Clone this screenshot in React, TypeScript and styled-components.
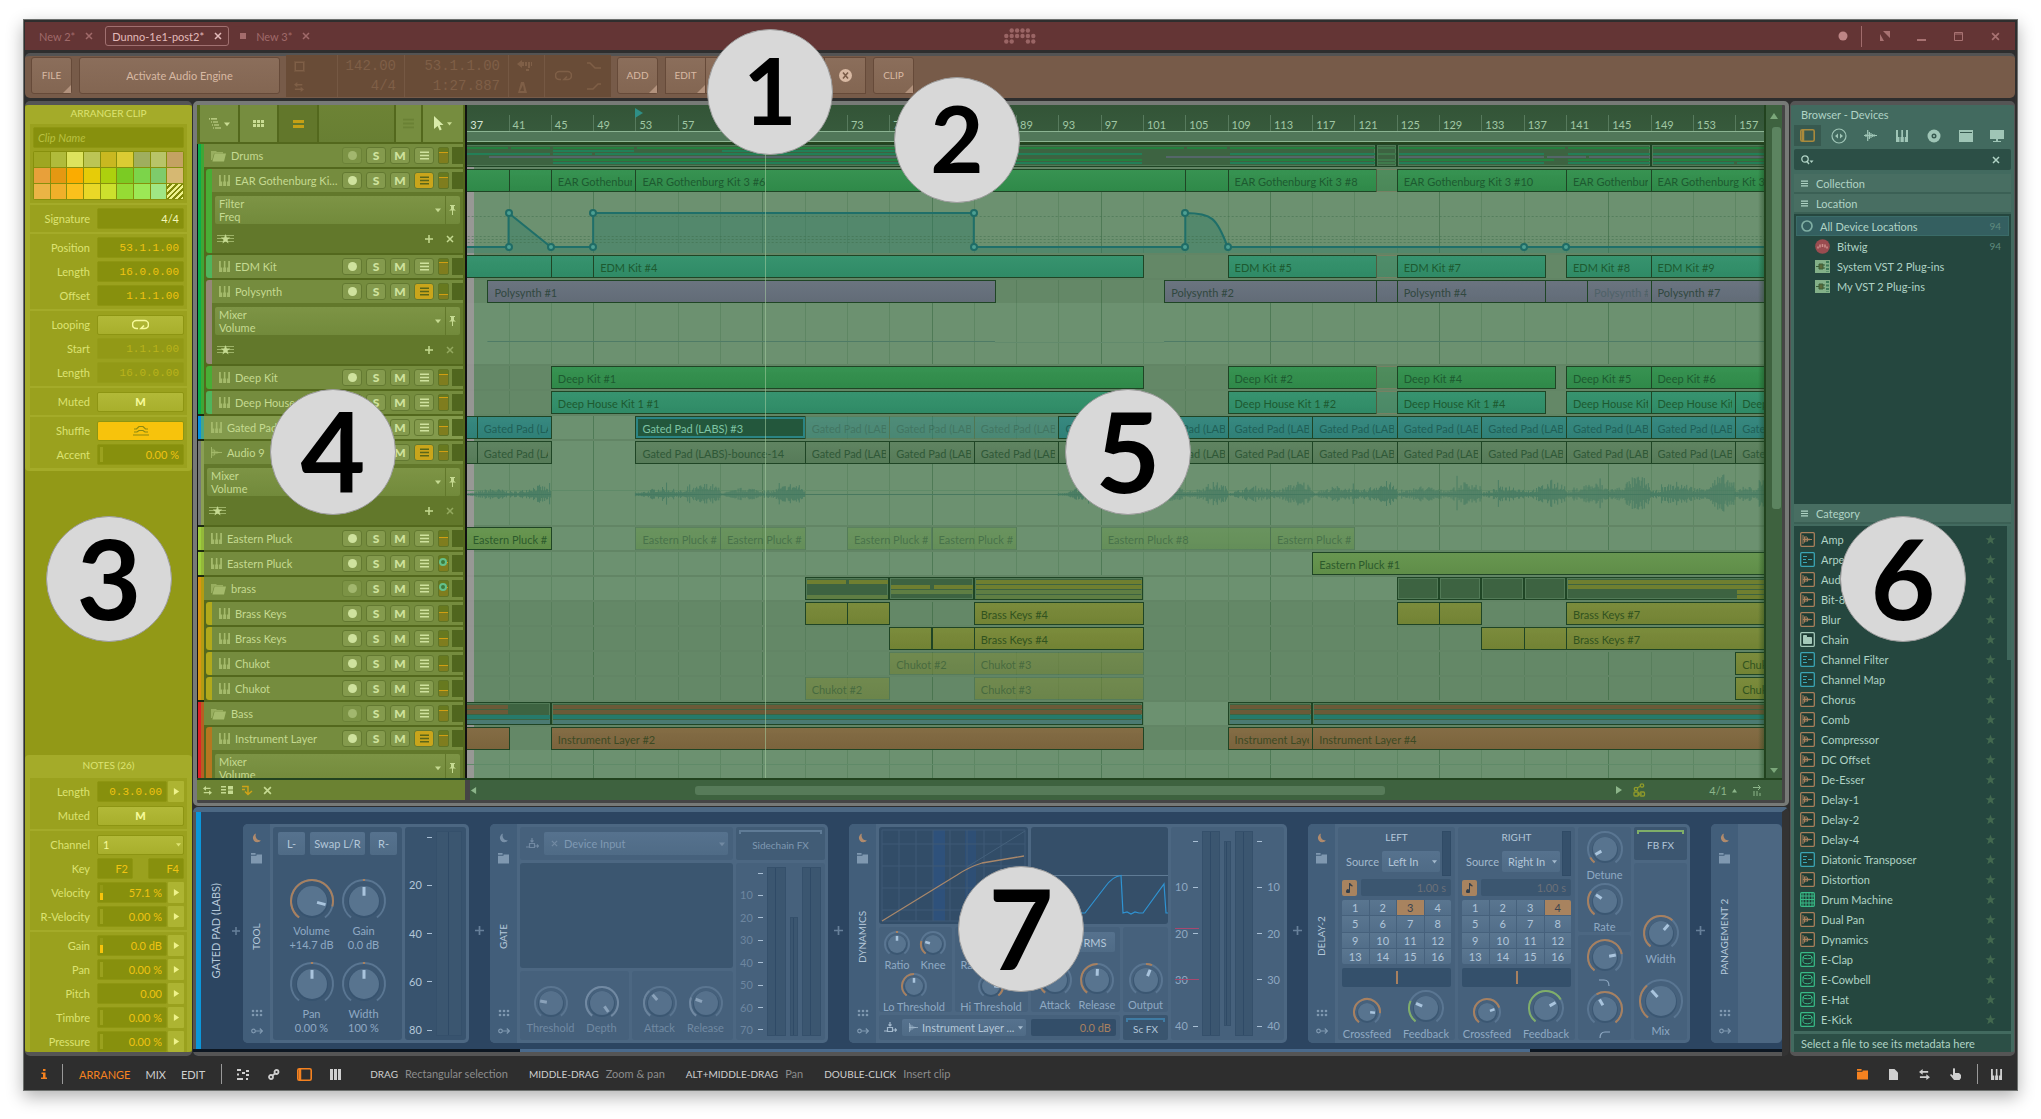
import React, { useId } from 'react';
import styled, { createGlobalStyle, css } from 'styled-components';

const Global = createGlobalStyle`
  *, *::before, *::after { box-sizing: border-box; }
  body { margin: 0; background: #fff; }
  body, button, input, select { font-family: Lato, "Open Sans", sans-serif; font-size: 11px; line-height: 13px; }
  button, input, select { margin: 0; padding: 0; border: 0; color: inherit; min-width: 0; appearance: none; background: none; border-radius: 0; }
  ul, h2, h3, p { margin: 0; padding: 0; font-size: 11px; font-weight: 400; list-style: none; }
  svg { display: block; flex: none; }
`;

/* ---------- timeline scale ---------- */
const FIRST_BAR = 37.07;
const BARS = 122.66;
const LAST = 160.5;
const pct = (bar: number) => `${((bar - FIRST_BAR) / BARS) * 100}%`;
const span = (a: number, b: number) => `${((b - a) / BARS) * 100}%`;

/* ---------- icons ---------- */
type IconProps = { s?: number };
const Keys = ({ s = 12 }: IconProps) => (
  <svg width={s} height={s} viewBox="0 0 12 12" fill="currentColor">
    <path d="M0 0h2v7h1.500v5H0zM4.500 7H5.300V0H7v7h.8v5H4.500zM8.800 7H10V0h2v12H8.800z" />
  </svg>
);
const Wave = ({ s = 12 }: IconProps) => (
  <svg width={s} height={s} viewBox="0 0 12 12" stroke="currentColor" strokeWidth="1" fill="none">
    <path d="M.5 0v12M2.200 2v8M4 3v6M5.500 4.500v3M7 5v2M8.500 5.300v1.400M0 6h12" />
  </svg>
);
const Folder = ({ s = 15 }: IconProps) => (
  <svg width={s} height={s - 3} viewBox="0 0 15 12" fill="currentColor">
    <path opacity=".75" d="M0 1h5l1 1h6v1.500H3L1.200 10H0z" /><path d="M3.600 3.500H15L13 11.500H1.400z" />
  </svg>
);
const FileTab = ({ s = 12 }: IconProps) => (
  <svg width={s} height={s} viewBox="0 0 12 12" fill="currentColor">
    <path d="M0 0h5v2H0zM0 3h6V1.500h6V11.500H0z" />
  </svg>
);
const Moon = () => (
  <svg width="10" height="10" viewBox="0 0 10 10" fill="currentColor"><path d="M4 .5A5 5 0 0 0 9 7.500 4.500 4.500 0 1 1 4 .5z" /></svg>
);
const Dots = ({ s = 12, cols = 3, rows = 2 }: { s?: number; cols?: number; rows?: number }) => (
  <svg width={s} height={(s * rows) / cols} viewBox={`0 0 ${cols * 4} ${rows * 4}`} fill="currentColor">
    {Array.from({ length: cols * rows }, (_, i) => <circle key={i} cx={(i % cols) * 4 + 2} cy={Math.floor(i / cols) * 4 + 2} r="1.3" />)}
  </svg>
);
const KeyArrow = () => (
  <svg width="12" height="8" viewBox="0 0 12 8" fill="none" stroke="currentColor" strokeWidth="1.200"><circle cx="2.500" cy="4" r="1.800" /><path d="M4.300 4H11M8.800 1.500L11.300 4 8.800 6.500" /></svg>
);
const Cross = ({ s = 7 }: IconProps) => (
  <svg width={s} height={s} viewBox="0 0 8 8" stroke="currentColor" strokeWidth="1.500"><path d="M1 1l6 6M7 1L1 7" /></svg>
);
const Plus = ({ s = 8 }: IconProps) => (
  <svg width={s} height={s} viewBox="0 0 8 8" stroke="currentColor" strokeWidth="1.500"><path d="M4 0v8M0 4h8" /></svg>
);
const Lines = ({ s = 10 }: IconProps) => (
  <svg width={s} height={s} viewBox="0 0 10 10" stroke="currentColor" strokeWidth="1.700"><path d="M0 1.500h10M0 5h10M0 8.500h10" /></svg>
);
const Tri = ({ dir = 'down', s = 6 }: { dir?: 'down' | 'up' | 'left' | 'right'; s?: number }) => {
  const d = { down: 'M0 2h8L4 7z', up: 'M0 7h8L4 1z', left: 'M7 0v8L1 4z', right: 'M1 0v8l6-4z' }[dir];
  return <svg width={s} height={s} viewBox="0 0 8 8" fill="currentColor"><path d={d} /></svg>;
};
const Loop = ({ s = 17 }: IconProps) => (
  <svg width={s} height={s * 0.65} viewBox="0 0 17 11" fill="none" stroke="currentColor" strokeWidth="1.600"><path d="M6 9.500H4.500a4 4 0 0 1 0-8h8a4 4 0 0 1 0 8H10M12 6.500L9 9.500h3.500" /></svg>
);
const StarLines = () => (
  <svg width="17" height="10" viewBox="0 0 17 10" fill="currentColor"><path opacity=".6" d="M0 1h17v1H0zM0 4h17v1H0zM0 7h17v1H0z" /><path d="M8.500 0l1.300 3.500h3.400l-2.700 2.200 1 3.800-3-2.200-3 2.200 1-3.800L3.800 3.500h3.400z" /></svg>
);
const Star = () => (
  <svg width="11" height="11" viewBox="0 0 24 24" fill="currentColor"><path d="M12 1l3 8h8l-6.500 5 2.500 8.500-7-5-7 5L7.500 14 1 9h8z" /></svg>
);
const Pin = () => (
  <svg width="7" height="10" viewBox="0 0 7 10" fill="currentColor"><path d="M1 0h5v1H5v3l2 1.500H0L2 4V1H1zM3 5.500h1V10H3z" /></svg>
);
const Swap = ({ s = 12 }: IconProps) => (
  <svg width={s} height={s} viewBox="0 0 12 12" fill="currentColor"><path d="M4 0v2.300h6v1.800H4v2.200L0 3.200zM8 5.700v2.200H1v1.800h7V12l4-3.100z" /></svg>
);
const PanelIcon = ({ s = 15 }: IconProps) => (
  <svg width={s} height={s - 2} viewBox="0 0 15 13" fill="none" stroke="currentColor" strokeWidth="1.600"><rect x=".8" y=".8" width="13.400" height="11.400" rx="1.500" /><path d="M3 1v11" strokeWidth="2.500" /></svg>
);
const Route = () => (
  <svg width="13" height="11" viewBox="0 0 13 11" fill="none" stroke="currentColor" strokeWidth="1.200"><path d="M6 0v4M4.500 2.500L6 4l1.500-1.500M3.500 5.500h5v4h-5zM0 9h3.500M8.500 8H12M11 6.500L12.500 8 11 9.500" /></svg>
);
const LOGO_DOTS = [[1, 0], [2, 0], [3, 0], [4, 0], [0, 1], [1, 1], [2, 1], [3, 1], [4, 1], [5, 1], [0, 2], [1, 2], [4, 2], [5, 2]];
const Logo = () => (
  <svg width="32" height="16" viewBox="0 0 32 16" fill="currentColor">{LOGO_DOTS.map(([x, y]) => <circle key={`${x}-${y}`} cx={x * 5.400 + 2.300} cy={y * 5.500 + 2.500} r="2.200" />)}</svg>
);

/* ---------- shell ---------- */
const Page = styled.div`position: relative; height: 100vh; padding: 19px 23px 28px; display: flex;`;
const Win = styled.div`
  flex: 1; min-width: 0; display: flex; flex-direction: column; background: #2e2e2e; border: 1px solid #6d706e; padding: 2px 2px 0 1px;
  box-shadow: 0 6px 16px rgba(0,0,0,.3);
`;
const TitleBar = styled.header`height: 28px; flex: none; display: grid; grid-template-columns: 1fr auto 1fr; align-items: center; background: #643535; color: #9a6565;`;
const Tabs = styled.nav`display: flex; align-items: center; gap: 5px; padding-left: 7px;`;
const TabBtn = styled.button<{ $on?: boolean }>`
  height: 20px; padding: 0 6px; display: flex; align-items: center; gap: 10px; border-radius: 3px;
  border: 1px solid ${p => (p.$on ? '#a07070' : 'transparent')}; color: ${p => (p.$on ? '#e3baba' : '#a06a6a')};
`;
const Sq = styled.span`width: 6px; height: 6px; background: #a46c6c; margin: 0 -2px 0 6px;`;
const WinBtns = styled.div`display: flex; justify-content: flex-end; align-items: center; padding-right: 1px;`;
const WinBtn = styled.button`width: 37px; height: 20px; display: grid; place-items: center; color: #a87272;`;
const TDiv = styled.span`width: 1px; height: 21px; background: #a06c6c; margin: 0 4px 0 0;`;

const ToolBar = styled.div`
  margin-top: 3px; height: 45px; flex: none; display: flex; align-items: flex-start; gap: 7px; padding: 1px 6px; background: #775b49;
  border-top: 3px solid #535353; border-radius: 5px; color: #d8b9a3;
`;
const TBtn = styled.button<{ $w: number; $corner?: boolean }>`
  position: relative; width: ${p => p.$w}px; height: 37px; display: grid; place-items: center; border: 1px solid #664a39; border-radius: 3px;
  background: linear-gradient(#8b6e5b, #836652);
  ${p => p.$corner && css`&::after { content: ''; position: absolute; right: 0; bottom: 0; border: solid transparent; border-width: 4px; border-right-color: #b2927d; border-bottom-color: #b2927d; }`}
`;
const BtnGroup = styled.div`display: flex; button { border-radius: 0; border-left-width: 0; } button:first-child { border-left-width: 1px; }`;
const Caps = styled.span`font-size: 10px;`;
const Display = styled.div`
  margin: -2px -1px 0; width: 325px; height: 42px; display: grid; grid-template-columns: 52px 67px 104px 36px 1fr; background: #694c37; color: #7f5f47;
  font-family: "Liberation Mono", monospace; font-size: 14px; line-height: 20px;
`;
const Cell = styled.div`display: flex; flex-direction: column; align-items: flex-end; justify-content: center; padding: 0 8px; border-right: 1px solid #755843; &:last-child { border: 0; }`;
const CellIcons = styled(Cell)`align-items: flex-start; gap: 10px;`;
const CellRow = styled(Cell)`flex-direction: row; justify-content: space-between; align-items: center; padding: 0 10px;`;

const Body = styled.main`flex: 1; min-height: 0; margin-top: 3px; display: grid; grid-template-columns: 167px minmax(0, 1fr) 225px; gap: 1px;`;

/* ---------- inspector ---------- */
const Inspector = styled.aside`
  display: flex; flex-direction: column; justify-content: space-between; background: #929917; color: #dde372;
  border: solid #555; border-width: 4px 0; border-radius: 5px;
`;
const IPanel = styled.section<{ $end?: boolean }>`background: #a4ab29; border-radius: 4px; padding: 0 5px ${p => (p.$end ? 0 : 3)}px; ${p => p.$end && css`> div:last-child { padding-bottom: 0; }`}`;
const ITitle = styled.h2<{ $h: number }>`height: ${p => p.$h}px; line-height: ${p => p.$h - 2}px; text-align: center; font-size: 10px;`;
const ISec = styled.div`display: flex; flex-direction: column; gap: 3px; padding: 3px; background: #9aa11e; & + & { margin-top: 2px; }`;
const IRow = styled.div`height: 21px; display: grid; grid-template-columns: 1fr 87px; gap: 7px; align-items: center; label, & > span { text-align: right; }`;
const Box = styled.input<{ $dim?: boolean; $mono?: boolean; $white?: boolean }>`
  width: 100%; height: 21px; padding: 0 4px; text-align: right; border-radius: 2px; border: 1px solid ${p => (p.$dim ? '#949c19' : '#8e9612')};
  background: ${p => (p.$dim ? '#929916' : '#87900d')}; color: ${p => (p.$white ? '#f4f7b8' : p.$dim ? '#b9b31c' : '#efc313')};
  ${p => p.$mono && css`font-family: "Liberation Mono", monospace;`}
`;
const NameBox = styled(Box)`text-align: left; font-style: italic; &::placeholder { color: #b9c040; opacity: 1; }`;
const IBtn = styled.button<{ $on?: boolean }>`
  width: 100%; height: 20px; display: grid; place-items: center; border-radius: 2px; font-weight: 900; border: 1px solid #8d9513;
  background: ${p => (p.$on ? '#f7c30c' : 'linear-gradient(#b2b938, #a8af2c)')}; color: ${p => (p.$on ? '#8d8a10' : '#f7fa9a')};
`;
const ISelect = styled.select`width: 100%; height: 20px; padding: 0 5px; border-radius: 2px; border: 1px solid #8d9513; background: linear-gradient(#b2b938, #a8af2c); color: #f7fa9a;`;
const SelWrap = styled.div<{ $c?: string }>`position: relative; min-width: 0; > svg { position: absolute; right: 3px; top: calc(50% - 3px); pointer-events: none; color: ${p => p.$c || 'inherit'}; }`;
const Pair = styled.div`display: grid; grid-template-columns: 36px 36px; justify-content: space-between;`;
const WithArrow = styled.div`display: grid; grid-template-columns: 1fr 16px; gap: 1px; position: relative;`;
const ArrowBtn = styled.button`height: 21px; display: grid; place-items: center; background: #adb432; border-radius: 1px; color: #eef28a;`;
const Gauge = styled.i<{ $fill?: boolean }>`position: absolute; left: 3px; top: 3px; width: 3px; height: 15px; background: ${p => (p.$fill ? 'linear-gradient(#929917 50%, #f7c30c 50%)' : '#9aa11e')};`;
const Palette = styled.div`height: 49px; display: grid; grid-template-columns: repeat(9, 1fr); grid-template-rows: repeat(3, 1fr); gap: 1px; padding: 1px; background: #87900d; border-radius: 2px;`;
const Swatch = styled.button<{ $c: string }>`background: ${p => p.$c};`;

const SWATCHES = ['#9ea622', '#b0bb3b', '#dde35d', '#bcc555', '#c9b820', '#dbcc33', '#9fae5e', '#b8c468', '#c4a262',
  '#e8a03a', '#e59812', '#fbac00', '#e6cc08', '#add00e', '#7bcb23', '#7cd44a', '#7ecb6b', '#d6b872',
  '#ebb445', '#f0b02a', '#fbc11c', '#e9d827', '#cce02d', '#96db34', '#9ce855', '#a0e684',
  'repeating-linear-gradient(135deg, #eef28a 0 2px, #808808 2px 4px)'];

function Field({ label, value, mono, dim, white, gauge }: { label: string; value: string; mono?: boolean; dim?: boolean; white?: boolean; gauge?: boolean }) {
  const id = useId();
  return (
    <IRow><label htmlFor={id}>{label}</label>
      <SelWrap><Box id={id} defaultValue={value} $mono={mono} $dim={dim} $white={white} />{gauge && <Gauge />}</SelWrap></IRow>
  );
}
function ArrowField({ label, value, mono, gauge }: { label: string; value: string; mono?: boolean; gauge?: 'empty' | 'fill' }) {
  const id = useId();
  return (
    <IRow><label htmlFor={id}>{label}</label>
      <WithArrow><Box id={id} defaultValue={value} $mono={mono} />{gauge && <Gauge $fill={gauge === 'fill'} />}<ArrowBtn aria-label={`${label} options`}><Tri dir="right" s={7} /></ArrowBtn></WithArrow></IRow>
  );
}
const InspectorView = () => (
  <Inspector>
    <IPanel>
      <ITitle $h={19}>ARRANGER CLIP</ITitle>
      <ISec><NameBox aria-label="Clip name" placeholder="Clip Name" />
        <Palette>{SWATCHES.map((c, i) => <Swatch key={i} $c={c} aria-label={`Colour ${i + 1}`} />)}</Palette></ISec>
      <ISec><Field label="Signature" value="4/4" white /></ISec>
      <ISec><Field label="Position" value="53.1.1.00" mono /><Field label="Length" value="16.0.0.00" mono /><Field label="Offset" value="1.1.1.00" mono /></ISec>
      <ISec><IRow><span>Looping</span><IBtn aria-label="Looping"><Loop /></IBtn></IRow>
        <Field label="Start" value="1.1.1.00" mono dim /><Field label="Length" value="16.0.0.00" mono dim /></ISec>
      <ISec><IRow><span>Muted</span><IBtn>M</IBtn></IRow></ISec>
      <ISec><IRow><span>Shuffle</span><IBtn $on aria-label="Shuffle">
        <svg width="16" height="11" viewBox="0 0 16 11" fill="none" stroke="currentColor" strokeWidth="1.200"><path d="M1 4h2.500L6 1.500h4L12.500 4H15M1 7h3l2-1.500h4L12 7h3M0 10h16" /></svg></IBtn></IRow>
        <Field label="Accent" value="0.00 %" gauge /></ISec>
    </IPanel>
    <IPanel $end>
      <ITitle $h={23}>NOTES (26)</ITitle>
      <ISec><ArrowField label="Length" value="0.3.0.00" mono /><IRow><span>Muted</span><IBtn>M</IBtn></IRow></ISec>
      <ISec>
        <IRow><label htmlFor="channel">Channel</label><SelWrap><ISelect id="channel"><option>1</option></ISelect><Tri s={5} /></SelWrap></IRow>
        <IRow><span>Key</span><Pair><Box aria-label="Lowest key" defaultValue="F2" /><Box aria-label="Highest key" defaultValue="F4" /></Pair></IRow>
        <ArrowField label="Velocity" value="57.1 %" gauge="fill" /><ArrowField label="R-Velocity" value="0.00 %" gauge="empty" />
      </ISec>
      <ISec>
        <ArrowField label="Gain" value="0.0 dB" gauge="fill" /><ArrowField label="Pan" value="0.00 %" gauge="empty" /><ArrowField label="Pitch" value="0.00" />
        <ArrowField label="Timbre" value="0.00 %" gauge="empty" /><ArrowField label="Pressure" value="0.00 %" gauge="empty" />
      </ISec>
    </IPanel>
  </Inspector>
);

/* ---------- arranger ---------- */
const Center = styled.div`display: flex; flex-direction: column; min-width: 0; min-height: 0; gap: 1px;`;
const Arranger = styled.section`flex: 1; min-height: 0; display: flex; flex-direction: column; background: #454545; border: solid #777a77; border-width: 4px 4px 3px; border-radius: 5px; padding: 0 3px 3px 0;`;
const TopRow = styled.div`display: flex; flex: none; height: 39px; background: #1d2b14;`;
const HeadTools = styled.div`width: 270px; flex: none; display: flex; gap: 2px; padding: 0 2px 2px 3px; background: #53681d; border-right: 2px solid #111;`;
const HeadBtn = styled.button<{ $w: number; $on?: boolean; $c?: string }>`
  width: ${p => p.$w}px; display: flex; align-items: center; justify-content: center; gap: 3px; color: ${p => p.$c || (p.$on ? '#c4a015' : '#c9dc93')};
  background: ${p => (p.$on ? '#62772b' : '#768d3f')};
`;
const HeadGap = styled.div`flex: 1; background: linear-gradient(#6d8335, #687f33);`;
const Ruler = styled.div`position: relative; flex: 1; min-width: 0; overflow: hidden; background: #25431f;`;
const RulerBar = styled.div`height: 27px; border-bottom: 1px solid #8cb493; position: relative; background: linear-gradient(#335437, #375a3c);`;
const LoopStrip = styled.div`height: 10px; background: #517759; border-bottom: 1px solid #8cb493;`;
const Tick = styled.span`position: absolute; bottom: 0; height: 16px; padding: 3px 0 0 3px; border-left: 1px solid #577a5d; color: #a0c7a4; &:first-child { border-color: transparent; color: #d5e6d6; }`;
const Cue = styled.span`position: absolute; top: 3px; color: #2f8f86;`;
const VBar = styled.div<{ $foot?: boolean }>`width: 18px; flex: none; background: #3e623f; color: #7ba77a; display: flex; flex-direction: column; align-items: center; border-left: 2px solid #22431f; ${p => p.$foot && css`justify-content: space-between; padding-bottom: 4px;`}`;
const VBarTop = styled(VBar)`justify-content: flex-start; padding-top: 7px; gap: 7px;`;
const VThumbTop = styled.span`width: 9px; flex: 1; margin-left: 4px; background: #5c8460; border-radius: 3px 3px 0 0;`;
const VThumb = styled.span`width: 9px; height: 365px; margin-left: 4px; background: #5c8460; border-radius: 0 0 3px 3px;`;
const Rows = styled.div`flex: 1; min-height: 0; display: flex; overflow: hidden; border-bottom: 2px solid #22431f;`;
const Headers = styled.div`width: 270px; flex: none; background: #53681d; border-right: 2px solid #111; border-left: 1px solid #111;`;

const TRow = styled.div<{ $open?: boolean }>`height: ${p => (p.$open ? 86 : 25)}px; display: flex; gap: 2px; padding-right: 2px;`;
const Strip = styled.span<{ $a: string; $b: string; $last?: boolean }>`
  width: 6px; flex: none; margin-right: -2px; background: linear-gradient(90deg, ${p => p.$a} 50%, ${p => p.$b} 50%); border-bottom: ${p => (p.$last ? '2px solid #1c2a10' : '0')};
`;
const ChildStrip = styled.span<{ $c: string }>`width: 6px; flex: none; margin: 0 -2px 2px 2px; background: ${p => p.$c}; border-radius: 3px 0 0 3px;`;
const TBody = styled.div`flex: 1; min-width: 0; display: flex; flex-direction: column; margin-bottom: 2px; background: #62782b;`;
const TLine = styled.div<{ $sel?: boolean }>`
  height: 23px; flex: none; display: flex; align-items: center; gap: 4px; padding: 0 0 0 7px; color: #c5da91; background: ${p => (p.$sel ? '#839a4c' : '#758c3e')};
  > svg { color: #a4ba6b; }
`;
const TName = styled.span`flex: 1; min-width: 0; white-space: nowrap; overflow: hidden; text-overflow: ellipsis; padding-left: 1px;`;
const TB = styled.button<{ $on?: boolean; $dim?: boolean }>`
  width: 20px; height: 17px; flex: none; display: grid; place-items: center; border-radius: 3px; border: 1px solid #637931; font-weight: 900; font-size: 12px;
  background: ${p => (p.$on ? '#c9a51b' : '#849a4d')}; color: ${p => (p.$on ? '#5a6618' : '#cfe29e')}; opacity: ${p => (p.$dim ? 0.5 : 1)};
`;
const Rec = styled.i`width: 9px; height: 9px; border-radius: 50%; background: currentColor;`;
const MiniFader = styled.i<{ $y: number; $knob?: boolean }>`
  position: relative; width: 11px; height: 17px; flex: none; border: 1px solid #5f7426; border-radius: 2px;
  background: linear-gradient(#67791f ${p => p.$y}px, #d19e12 ${p => p.$y}px, #d19e12 ${p => p.$y + 1}px, #7f7d1e ${p => p.$y + 1}px);
  &::after { content: ''; display: ${p => (p.$knob ? 'block' : 'none')}; position: absolute; left: 0; top: 2px; width: 8px; height: 8px; border: 2px solid #63c08a; border-radius: 50%; background: #3e7a3a; }
`;
const MiniMeter = styled.i`width: 11px; height: 17px; flex: none; background: #50661e; margin-left: -1px;`;
const AutoSel = styled.button`
  height: 28px; margin: 4px 3px 0; padding: 0 4px; text-align: left; display: grid; grid-template-columns: 1fr 10px 7px; align-items: center; column-gap: 4px; border-radius: 2px;
  background: linear-gradient(90deg, transparent calc(100% - 15px), #62782b calc(100% - 15px), #62782b calc(100% - 14px), transparent calc(100% - 14px)), linear-gradient(#7d9445, #728a3b); color: #c5da91; flex: none;
`;
const AutoRow = styled.div<{ $dim: boolean }>`display: flex; align-items: center; gap: 13px; padding: 10px 9px 0 5px; color: #c5da91; > :first-child { margin-right: auto; } > :last-child { opacity: ${p => (p.$dim ? 0.5 : 1)}; }`;

const Timeline = styled.div`position: relative; flex: 1; min-width: 0; overflow: hidden; background: #668a68;`;
const Lane = styled.div<{ $open?: boolean; $child?: boolean }>`position: relative; height: ${p => (p.$open ? 86 : 25)}px; border-bottom: 2px solid #628565; background: ${p => (p.$child ? '#648867' : '#6c9170')};`;
const LaneTop = styled.div<{ $child?: boolean }>`height: 23px; background: ${p => (p.$child ? '#648867' : 'transparent')};`;
const GridLine = styled.i<{ $heavy?: boolean }>`position: absolute; top: 0; bottom: 0; width: 1px; background: ${p => (p.$heavy ? 'rgba(40,90,50,.42)' : 'rgba(40,90,50,.2)')};`;
const EdgeShade = styled.i`position: absolute; left: 0; top: 0; bottom: -2px; width: 7px; background: rgba(165,155,162,.75);`;
const RightShade = styled.i`position: absolute; right: 0; top: 0; bottom: 0; width: 6px; background: linear-gradient(90deg, transparent, rgba(20,60,20,.4));`;
const Playhead = styled.i`position: absolute; top: 0; bottom: 0; width: 1px; background: rgba(165,205,160,.55);`;
const ClipBox = styled.div<{ $c: string; $state?: string; $cut?: boolean; $text?: string }>`
  position: absolute; top: 0; height: 23px; padding: 5px 3px 0 ${p => (p.$cut ? 16 : 6)}px; overflow: hidden; white-space: nowrap; border: 1px solid #1f4525;
  background: linear-gradient(rgba(255,255,255,.03), rgba(0,0,0,.04)), ${p => p.$c}; color: ${p => p.$text || '#1d5a30'};
  ${p => p.$state === 'muted' && css`opacity: .55; border-color: #4d7450;`}
  ${p => p.$state === 'ghost' && css`opacity: .45; border-color: #8a7a60;`}
  ${p => p.$state === 'sel' && css`background: #23573c; color: #7fc4a4; box-shadow: inset 0 0 0 2px #2b8484;`}
`;
const ClipIn = styled.span`display: block; overflow: hidden;`;
const GroupBox = styled.div`position: absolute; top: 0; height: 23px; background: #3d6341; border: 1px solid #1f4525; box-shadow: inset 0 0 0 1px #527a57;`;
const MiniBar = styled.i<{ $c: string; $h: number }>`position: absolute; height: ${p => p.$h}px; background: ${p => p.$c};`;
const Curve = styled.svg`position: absolute; left: 0; top: 23px; width: 100%; height: 61px;`;
const Handle = styled.i`position: absolute; width: 8px; height: 8px; margin: -4px 0 0 -4px; border: 2px solid #1f6c66; border-radius: 50%; background: #4da093;`;

type Clip = [number, number, string?, string?, string?];
type Track = {
  name: string; icon: 'keys' | 'wave' | 'folder'; child?: boolean; a: string; b: string; c?: string; auto?: [string, string]; open?: boolean; fader: number; knob?: boolean; sel?: boolean; last?: boolean;
  color: string; text?: string; clips: Clip[]; boxes?: [number, number][]; bars?: Bar[]; barH?: number;
};
type Bar = [number, number, number, string];
const G = '#318f4c', T = '#31906a', P = '#66707c';
const octets = (from: number, label: string, state?: string): Clip[] => {
  const r: Clip[] = [];
  for (let b = from; b < 160; b += 8) r.push([b, Math.min(b + 8, LAST), label, state]);
  return r;
};
const row = (y: number, c: string, ranges: number[][]): Bar[] => ranges.map(([a, b]) => [a, b, y, c]);
const DRUM_BARS: Bar[] = [
  ...row(3, '#24813f', [[36, 41], [41, 45], [45, 53], [53, 105], [105, 109], [109, 123], [125, 141], [141, 149], [149, LAST]]),
  ...row(6, '#237f57', [[45, 53], [61, 81]]),
  ...row(9, '#237f57', [[36, 45], [45, 49], [49, 101], [109, 123], [125, 139], [141, 149], [149, LAST]]),
  ...row(12, '#55666a', [[39, 87], [103, 123], [125, 139], [139, 143], [143, 149], [149, LAST]]),
  ...row(15, '#24813f', [[45, 101], [109, 123], [125, 140], [141, 149], [149, LAST]]),
  ...row(18, '#237f57', [[45, 101], [109, 123], [125, 139], [141, 149], [149, 157], [157, LAST]]),
  ...[3, 9, 15, 18].flatMap(y => row(y, '#3f7a4c', [[123, 125]])),
];
const BASS_BARS: Bar[] = [
  ...[3, 8].flatMap(y => row(y, '#6b5a38', [[36, 41], [45, 101], [109, 117], [117, LAST]])),
  ...row(13, '#267a6b', [[36, 45], [45, 101], [109, 117], [117, LAST]]),
  ...row(18, '#4b7a72', [[36, 45], [45, 101], [109, 117], [117, LAST]]),
];
const BRASS_BARS: Bar[] = [
  ...row(3, '#6f7f30', [[69, 73], [73, 77], [85, 101], [141, LAST]]),
  ...row(8, '#6f7f30', [[77, 81], [81, 85], [85, 101], [141, LAST]]),
  ...row(13, '#5f7e43', [[77, 85], [85, 101]]), ...row(18, '#5f7e43', [[69, 77], [85, 101]]),
  ...row(13, '#6f7f30', [[157, LAST]]), ...row(18, '#6f7f30', [[157, LAST]]),
];
const DRUMS = { a: '#0aae4c', b: '#3fa735' };
const BRASS = { a: '#d99513', b: '#b39c12' };
const BASS = { a: '#e02228', b: '#b66022' };
const TRACKS: Track[] = [
  { name: 'Drums', icon: 'folder', ...DRUMS, fader: 4, color: G, clips: [], boxes: [[36, 123], [123, 125], [125, 149], [149, LAST]], bars: DRUM_BARS, barH: 2 },
  { name: 'EAR Gothenburg Kit 3', icon: 'keys', child: true, ...DRUMS, c: '#49ad35', auto: ['Filter', 'Freq'], open: true, fader: 4, color: G,
    clips: [[36, 41], [41, 45], [45, 53, 'EAR Gothenburg Kit'], [53, 105, 'EAR Gothenburg Kit 3 #6'], [105, 109], [109, 123, 'EAR Gothenburg Kit 3 #8'], [123, 125, '', 'ghost'], [125, 141, 'EAR Gothenburg Kit 3 #10'], [141, 149, 'EAR Gothenburg Kit'], [149, LAST, 'EAR Gothenburg Kit 3 #12']] },
  { name: 'EDM Kit', icon: 'keys', child: true, ...DRUMS, c: '#4fb55c', fader: 3, color: T,
    clips: [[36, 45], [45, 49], [49, 101, 'EDM Kit #4'], [109, 123, 'EDM Kit #5'], [123, 125, '', 'ghost'], [125, 139, 'EDM Kit #7'], [141, 149, 'EDM Kit #8'], [149, LAST, 'EDM Kit #9']] },
  { name: 'Polysynth', icon: 'keys', child: true, ...DRUMS, c: '#968778', auto: ['Mixer', 'Volume'], open: true, fader: 10, color: P, text: '#31483f',
    clips: [[39, 87, 'Polysynth #1'], [103, 123, 'Polysynth #2'], [123, 125], [125, 139, 'Polysynth #4'], [139, 143], [143, 149, 'Polysynth #', '', '#4f6268'], [149, LAST, 'Polysynth #7']] },
  { name: 'Deep Kit', icon: 'keys', child: true, ...DRUMS, c: '#49ad35', fader: 4, color: G,
    clips: [[45, 101, 'Deep Kit #1'], [109, 123, 'Deep Kit #2'], [123, 125, '', 'ghost'], [125, 140, 'Deep Kit #4'], [141, 149, 'Deep Kit #5'], [149, LAST, 'Deep Kit #6']] },
  { name: 'Deep House Kit 1', icon: 'keys', child: true, ...DRUMS, c: '#4fb55c', fader: 2, color: T, last: true,
    clips: [[45, 101, 'Deep House Kit 1 #1'], [109, 123, 'Deep House Kit 1 #2'], [123, 125, '', 'ghost'], [125, 139, 'Deep House Kit 1 #4'], [141, 149, 'Deep House Kit'], [149, 157, 'Deep House Kit'], [157, LAST, 'Deep House']] },
  { name: 'Gated Pad (LABS)', icon: 'keys', a: '#0892e0', b: '#4aa583', fader: 6, sel: true, last: true, color: '#31857c', text: '#1f5f56',
    clips: [[36, 38], [38, 45, 'Gated Pad (LABS)'], [53, 69, 'Gated Pad (LABS) #3', 'sel', '#7fc4a4'], [69, 77, 'Gated Pad (LABS)', 'muted'], [77, 85, 'Gated Pad (LABS)', 'muted'], [85, 93, 'Gated Pad (LABS)', 'muted'], ...octets(93, 'Gated Pad (LABS)')] },
  { name: 'Audio 9', icon: 'wave', a: '#767a78', b: '#8a9f54', auto: ['Mixer', 'Volume'], open: true, fader: 6, last: true, color: '#5a805c', text: '#2f5837',
    clips: [[36, 38], [38, 45, 'Gated Pad (LABS)'], [53, 69, 'Gated Pad (LABS)-bounce-14'], ...octets(69, 'Gated Pad (LABS)')] },
  { name: 'Eastern Pluck', icon: 'keys', a: '#9fce3e', b: '#93b839', fader: 6, last: true, color: '#63934b', text: '#2c5a2c',
    clips: [[36, 45, 'Eastern Pluck #'], [53, 61, 'Eastern Pluck #', 'muted'], [61, 69, 'Eastern Pluck #', 'muted'], [73, 81, 'Eastern Pluck #', 'muted'], [81, 89, 'Eastern Pluck #', 'muted'], [97, 113, 'Eastern Pluck #8', 'muted'], [113, 121, 'Eastern Pluck #', 'muted']] },
  { name: 'Eastern Pluck', icon: 'keys', a: '#9fce3e', b: '#93b839', fader: 6, knob: true, last: true, color: '#63934b', text: '#2c5a2c', clips: [[117, LAST, 'Eastern Pluck #1']] },
  { name: 'brass', icon: 'folder', ...BRASS, fader: 6, knob: true, color: '#778836', clips: [], boxes: [[69, 77], [77, 85], [85, 101], [125, 129], [129, 133], [133, 137], [137, 141], [141, LAST]], barH: 4, bars: BRASS_BARS },
  { name: 'Brass Keys', icon: 'keys', child: true, ...BRASS, c: '#b1a91b', fader: 6, color: '#778836', text: '#31531f', clips: [[69, 73], [73, 77], [85, 101, 'Brass Keys #4'], [125, 129], [129, 133], [141, LAST, 'Brass Keys #7']] },
  { name: 'Brass Keys', icon: 'keys', child: true, ...BRASS, c: '#b1a91b', fader: 7, color: '#778836', text: '#31531f', clips: [[77, 81], [81, 85], [85, 101, 'Brass Keys #4'], [133, 137], [137, 141], [141, LAST, 'Brass Keys #7']] },
  { name: 'Chukot', icon: 'keys', child: true, ...BRASS, c: '#b1a91b', fader: 9, color: '#778836', text: '#31531f', clips: [[77, 85, 'Chukot #2', 'muted'], [85, 101, 'Chukot #3', 'muted'], [157, LAST, 'Chukot #4']] },
  { name: 'Chukot', icon: 'keys', child: true, ...BRASS, c: '#b1a91b', fader: 9, last: true, color: '#778836', text: '#31531f', clips: [[69, 77, 'Chukot #2', 'muted'], [85, 101, 'Chukot #3', 'muted'], [157, LAST, 'Chukot #4']] },
  { name: 'Bass', icon: 'folder', ...BASS, fader: 4, color: '#80683f', clips: [], boxes: [[36, 45], [45, 101], [109, 117], [117, LAST]], bars: BASS_BARS, barH: 4 },
  { name: 'Instrument Layer', icon: 'keys', child: true, ...BASS, c: '#b57720', auto: ['Mixer', 'Volume'], open: true, fader: 4, color: '#80683f', text: '#3d4a24',
    clips: [[36, 41], [45, 101, 'Instrument Layer #2'], [109, 117, 'Instrument Layer'], [117, LAST, 'Instrument Layer #4']] },
];

const wavePath = () => {
  let seed = 7, d = '';
  const rnd = () => { seed = (seed * 16807) % 2147483647; return seed / 2147483647; };
  const segs: [number, number, number][] = [[37, 45, 9], [53, 61, 11], [61, 69, 11], [93, 101, 11], [101, 109, 12], [109, 117, 13], [117, 125, 13], [125, 133, 13], [133, 141, 14], [141, 149, 18], [149, 157, 19], [157, 160, 17]];
  segs.forEach(([a, b, amp]) => {
    for (let x = a; x < b; x += 0.095) {
      const t = (x - a) / (b - a);
      const env = 0.18 + 0.5 * Math.pow(Math.sin(t * 5.5), 2) * (0.5 + t) + 0.35 * t * (1 - Math.pow(t, 9));
      let h = amp * env * (0.35 + 0.65 * Math.pow(rnd(), 1.5));
      if (rnd() > 0.97) h *= 2;
      d += `M${x.toFixed(2)} ${(30.5 - h).toFixed(1)}V${(30.5 + h * 0.85).toFixed(1)}`;
    }
  });
  return d;
};
const WAVE = wavePath();
const LOW = 55, HIGH = 21;
const HANDLES: [number, number][] = [[41, HIGH], [41, LOW], [45, LOW], [49, LOW], [49, HIGH], [85, HIGH], [85, LOW], [105, LOW], [105, HIGH], [109, LOW], [137, LOW], [141, LOW]];
const AUTO = `M36 ${LOW}H41V${HIGH}L45 ${LOW}H49V${HIGH}H85V${LOW}H105V${HIGH}C107.500 ${HIGH} 108 26 109 ${LOW}H161`;
const VB = `${FIRST_BAR} 0 ${BARS} 61`;
const rulerBars = Array.from({ length: 31 }, (_, i) => 37 + i * 4);

const TrackHeader = ({ t }: { t: Track }) => (
  <TRow $open={t.open}>
    <Strip $a={t.a} $b={t.b} $last={t.last} />
    {t.child && <ChildStrip $c={t.c!} />}
    <TBody>
      <TLine $sel={t.sel}>
        {t.icon === 'keys' ? <Keys s={11} /> : t.icon === 'wave' ? <Wave s={11} /> : <Folder />}
        <TName>{t.name}</TName>
        <TB $dim={t.icon === 'folder'} aria-label="Record arm"><Rec /></TB><TB>S</TB><TB>M</TB>
        <TB $on={!!t.auto} aria-label="Automation lanes"><Lines s={9} /></TB>
        <MiniFader $y={t.fader} $knob={t.knob} /><MiniMeter />
      </TLine>
      {t.auto && <>
        <AutoSel><span>{t.auto[0]}<br />{t.auto[1]}</span><Tri s={6} /><Pin /></AutoSel>
        <AutoRow $dim={t.auto[0] === 'Mixer'}><StarLines /><Plus /><Cross s={8} /></AutoRow>
      </>}
    </TBody>
  </TRow>
);
const LaneView = ({ t }: { t: Track }) => (
  <Lane $open={t.open} $child={t.child && !t.open}>
    <LaneTop $child={t.child} />
    {rulerBars.slice(1).map(b => <GridLine key={b} $heavy={(b - 1) % 16 === 0} style={{ left: pct(b) }} />)}
    <EdgeShade />
    {t.boxes?.map(([a, b]) => <GroupBox key={a} style={{ left: pct(a), width: span(a, b) }} />)}
    {t.bars?.map(([a, b, y, c], i) => <MiniBar key={i} $c={c} $h={t.barH!} style={{ left: `calc(${pct(a)} + 2px)`, width: `calc(${span(a, b)} - 3px)`, top: y }} />)}
    {t.clips.map(([a, b, label, state, text], i) => (
      <ClipBox key={i} $c={t.color} $state={state} $cut={a === 36} $text={text || t.text} style={{ left: pct(a), width: `calc(${span(a, b)} + 1px)` }}><ClipIn>{label}</ClipIn></ClipBox>
    ))}
    {t.name.startsWith('EAR') && <>
      <Curve viewBox={VB} preserveAspectRatio="none">
        <path d={`${AUTO}V61H36Z`} fill="#2f7a66" opacity=".4" />
        <path d="M36 24.500H161M36 44.500H161M36 47.500H161M36 50.500H161" stroke="#3f6e4c" strokeWidth="1" strokeDasharray="2 2" vectorEffect="non-scaling-stroke" opacity=".5" />
        <path d={AUTO} fill="none" stroke="#1f6f69" strokeWidth="2" vectorEffect="non-scaling-stroke" />
      </Curve>
      {HANDLES.map(([b, y], i) => <Handle key={i} style={{ left: pct(b), top: y + 23 }} />)}
    </>}
    {t.name === 'Polysynth' && <Curve viewBox={VB} preserveAspectRatio="none"><path d="M39 38.500H87M103 38.500H161" stroke="#4f7b66" vectorEffect="non-scaling-stroke" /><path d="M87 39.500H103" stroke="#628a6c" vectorEffect="non-scaling-stroke" /></Curve>}
    {t.name === 'Audio 9' && <Curve viewBox={VB} preserveAspectRatio="none">
      <path d="M36 26.500H161" stroke="#5f8a68" vectorEffect="non-scaling-stroke" />
      <path d="M36 30.500H45M53 30.500H161" stroke="#48785f" vectorEffect="non-scaling-stroke" />
      <path d={WAVE} stroke="#447a62" vectorEffect="non-scaling-stroke" opacity=".8" />
    </Curve>}
    {t.name === 'Instrument Layer' && <Curve viewBox={VB} preserveAspectRatio="none"><path d="M36 14.500H161" stroke="#5f8a68" vectorEffect="non-scaling-stroke" /></Curve>}
  </Lane>
);

const BottomRow = styled.div`height: 20px; flex: none; display: flex;`;
const BottomLeft = styled.div`width: 268px; flex: none; display: flex; align-items: center; gap: 8px; padding-left: 4px; background: #6b8232; color: #c5da91;`;
const SmallBtn = styled.button<{ $c?: string }>`width: 12px; height: 16px; display: grid; place-items: center; color: ${p => p.$c || 'inherit'};`;
const Snap = styled(SmallBtn)`margin-left: 10px;`;
const BottomRight = styled.div`flex: 1; display: flex; align-items: center; margin-left: 5px; padding-right: 20px; background: #3e623f; color: #8cb58a;`;
const HTrack = styled.div`flex: 1; height: 9px; margin: 0 12px 0 7px; display: grid; grid-template-columns: 213fr 696fr 220fr; i { grid-column: 2; background: #577b59; border-radius: 3px; }`;
const Zoom = styled.span`display: flex; align-items: center; gap: 5px; margin: 0 13px 0 64px;`;

const ArrangerView = () => (
  <Arranger>
    <TopRow>
      <HeadTools>
        <HeadBtn $w={38} aria-label="Track view"><svg width="12" height="11" viewBox="0 0 12 11" stroke="currentColor" strokeWidth="1.200"><path d="M0 .8h1M2 .8h6M2 4h1M4 4h5M3 7h1M5 7h5M4 10h1M6 10h6" /></svg><Tri s={6} /></HeadBtn>
        <HeadBtn $w={37} aria-label="Launcher"><svg width="11" height="7" viewBox="0 0 11 7" fill="currentColor"><path d="M0 0h3v3H0zM4 0h3v3H4zM8 0h3v3H8zM0 4h3v3H0zM4 4h3v3H4zM8 4h3v3H8z" /></svg></HeadBtn>
        <HeadBtn $w={38} $on aria-label="Timeline"><svg width="11" height="8" viewBox="0 0 11 8" fill="currentColor"><path d="M0 0h11v3H0zM0 5h11v3H0z" /></svg></HeadBtn>
        <HeadGap />
        <HeadBtn $w={25} $c="#6a8135" aria-label="Cue markers"><Lines s={11} /></HeadBtn>
        <HeadBtn $w={40} aria-label="Pointer tool"><svg width="10" height="15" viewBox="0 0 10 15" fill="#d9ebaa"><path d="M0 0l9.500 9H5.700l2 4.500-2 1L3.600 10 0 13z" /></svg><Tri s={5} /></HeadBtn>
      </HeadTools>
      <Ruler>
        <RulerBar>{rulerBars.map(b => <Tick key={b} style={{ left: pct(b) }}>{b}</Tick>)}
          <Cue style={{ left: pct(53) }}><svg width="8" height="10" viewBox="0 0 8 10" fill="currentColor"><path d="M0 0l8 5-8 5z" /></svg></Cue></RulerBar>
        <LoopStrip />
      </Ruler>
      <VBarTop><Tri dir="up" s={8} /><VThumbTop /></VBarTop>
    </TopRow>
    <Rows>
      <Headers>{TRACKS.map((t, i) => <TrackHeader key={i} t={t} />)}</Headers>
      <Timeline>
        {TRACKS.map((t, i) => <LaneView key={i} t={t} />)}
        <Playhead style={{ left: pct(65.28) }} />
        <RightShade />
      </Timeline>
      <VBar $foot><VThumb /><Tri s={8} /></VBar>
    </Rows>
    <BottomRow>
      <BottomLeft>
        <SmallBtn aria-label="Input output"><Swap s={9} /></SmallBtn>
        <SmallBtn aria-label="Mixer sections"><svg width="12" height="8" viewBox="0 0 12 8" fill="currentColor"><path d="M0 0h5v1.500H0zM0 3h5v1.500H0zM0 6h5v1.500H0zM7 0h5v3.500H7zM7 4.500h5V8H7z" /></svg></SmallBtn>
        <SmallBtn $c="#cfa318" aria-label="Follow"><svg width="11" height="11" viewBox="0 0 11 11" fill="none" stroke="currentColor" strokeWidth="1.500"><path d="M0 1.500h6V9M3 6.500L6 9.500l4-3.500M0 4.500h3" /></svg></SmallBtn>
        <SmallBtn aria-label="Crossfade"><Cross s={9} /></SmallBtn>
      </BottomLeft>
      <BottomRight>
        <Tri dir="left" s={7} /><HTrack><i /></HTrack><Tri dir="right" s={8} />
        <Snap $c="#8f9a2a" aria-label="Snap"><svg width="13" height="14" viewBox="0 0 13 14" fill="none" stroke="currentColor" strokeWidth="1.300"><circle cx="3" cy="6" r="1.700" /><circle cx="9" cy="2.500" r="1.700" /><path d="M4 5l4-2" /><rect x="1" y="9" width="4.500" height="4" rx="1" /><rect x="7" y="9" width="4.500" height="4" rx="1" /><path d="M4 11h5" /></svg></Snap>
        <Zoom>4/1 <Tri dir="up" s={5} /></Zoom>
        <SmallBtn aria-label="Follow playback"><svg width="9" height="12" viewBox="0 0 9 12" fill="none" stroke="currentColor"><path d="M1 3.500h7M6 1l2.500 2.500L6 6M2 7v5M5 7v5M8 9v3" /></svg></SmallBtn>
      </BottomRight>
    </BottomRow>
  </Arranger>
);

/* ---------- device chain ---------- */
const Chain = styled.section`
  height: 249px; flex: none; display: flex; flex-direction: column; background: #2c4561; color: #a3b9cd; border: solid #4c6883; border-width: 5px 7px 0 0; border-right-color: #333; border-radius: 5px; overflow: hidden;
`;
const ChainRow = styled.div`flex: 1; min-height: 0; display: flex; padding-left: 3px; overflow: hidden; background: linear-gradient(90deg, #555 3px, transparent 3px);`;
const ChainColor = styled.i`width: 5px; flex: none; background: #0b97da;`;
const ChainName = styled.div`width: 28px; flex: none; display: grid; place-items: center; span { writing-mode: vertical-rl; transform: rotate(180deg); white-space: nowrap; color: #b6c9da; }`;
const Add = styled.button<{ $w: number }>`width: ${p => p.$w}px; flex: none; display: grid; place-items: center; color: #67809a;`;
const ChainFoot = styled.div`height: 7px; flex: none; padding-left: 327px; border-bottom: 4px solid #555; background: #0d1722; i { display: block; width: 80%; height: 3px; background: #4a6a8c; }`;
const Device = styled.article<{ $w?: number }>`
  ${p => (p.$w ? css`width: ${p.$w}px; flex: none;` : css`flex: 1 0 71px;`)} height: 219px; margin-top: 12px; display: flex; background: #4c6782; border-radius: 5px; overflow: hidden;
`;
const DStrip = styled.div<{ $on: boolean }>`width: 27px; flex: none; display: flex; flex-direction: column; align-items: center; background: #425e7a; padding: 9px 0 8px; color: #7f98b0; gap: 10px; > :first-child { color: ${p => (p.$on ? '#b08a6c' : '#7890a8')}; }`;
const DName = styled.h3`flex: 1; writing-mode: vertical-rl; transform: rotate(180deg); text-align: center; font-size: 10px; color: #b6c9da; white-space: nowrap;`;
const DBody = styled.div<{ $cols: string }>`flex: 1; min-width: 0; padding: 3px; display: grid; grid-template-columns: ${p => p.$cols}; gap: 3px;`;
const Col = styled.div<{ $rows?: string }>`min-width: 0; min-height: 0; display: grid; grid-template-columns: minmax(0, 1fr); gap: 3px; ${p => p.$rows && css`grid-template-rows: ${p.$rows};`}`;
const Split = styled.div<{ $cols: string }>`display: grid; grid-template-columns: ${p => p.$cols}; gap: 3px; min-height: 0;`;
const Pane = styled.div<{ $bg?: string; $dim?: boolean; $p?: string }>`
  position: relative; min-width: 0; min-height: 0; background: ${p => p.$bg || '#46617c'}; border-radius: 3px; padding: ${p => p.$p || '0'}; ${p => p.$dim && css`color: #7189a2;`}
`;
const Flex = styled.div<{ $gap?: number; $j?: string; $a?: string; $p?: string; $col?: boolean }>`
  display: flex; flex-direction: ${p => (p.$col ? 'column' : 'row')}; gap: ${p => p.$gap || 0}px; justify-content: ${p => p.$j || 'flex-start'}; align-items: ${p => p.$a || 'center'}; padding: ${p => p.$p || 0};
`;
const DBtn = styled.button<{ $w?: number; $h?: number }>`
  ${p => p.$w && css`width: ${p.$w}px;`} height: ${p => p.$h || 23}px; flex: none; background: linear-gradient(#56728e, #4f6b86); border-radius: 2px; color: #b4c7d9;
`;
const DSelect = styled.select<{ $dim?: boolean; $pl?: number }>`width: 100%; height: 100%; padding: 0 ${p => (p.$pl ? 10 : 14)}px 0 ${p => p.$pl ?? 6}px; background: linear-gradient(#56728e, #4f6b86); border-radius: 2px; color: ${p => (p.$dim ? '#7f99b3' : '#b4c7d9')};`;
const SelBox = styled(SelWrap)<{ $w?: number; $h: number }>`${p => (p.$w ? css`width: ${p.$w}px; flex: none;` : css`flex: 1;`)} height: ${p => p.$h}px;`;
const SelLead = styled.span`position: absolute; left: 7px; top: 0; height: 100%; display: flex; align-items: center; pointer-events: none;`;
const KnobLabel = styled.label<{ $w?: number; $dim?: boolean }>`
  position: relative; display: flex; flex-direction: column; align-items: center; width: ${p => p.$w || 52}px; flex: none; white-space: nowrap; color: ${p => (p.$dim ? '#7189a2' : '#8fa9c3')}; text-align: center; line-height: 14px;
  input { position: absolute; inset: 0; width: 100%; height: 100%; opacity: 0; }
`;
const polar = (c: number, r: number, deg: number) => { const a = ((deg - 90) * Math.PI) / 180; return `${(c + r * Math.cos(a)).toFixed(2)} ${(c + r * Math.sin(a)).toFixed(2)}`; };
const arc = (c: number, r: number, a: number, b: number) => `M${polar(c, r, a)}A${r} ${r} 0 ${b - a > 180 ? 1 : 0} 1 ${polar(c, r, b)}`;
function Knob({ r = 17, at, from, to, c = '#a8805f', label, value, w, dim, name }: { r?: number; at: number; from?: number; to?: number; c?: string; label?: React.ReactNode; value?: string; w?: number; dim?: boolean; name?: string }) {
  const s = r * 2 + 4, m = s / 2, inner = Math.round(r * 0.72);
  return (
    <KnobLabel $w={w} $dim={dim}>
      <svg width={s} height={s} viewBox={`0 0 ${s} ${s}`} fill="none">
        <path d={arc(m, r, -142, 142)} stroke={dim ? '#5a7590' : '#5a7692'} strokeWidth="2" />
        {from !== undefined && <path d={arc(m, r, from, to ?? at)} stroke={c} strokeWidth="2" />}
        <circle cx={m} cy={m + 1} r={inner + 1} fill="#34506c" opacity=".6" />
        <circle cx={m} cy={m} r={inner} fill={dim ? '#56718c' : '#58748f'} />
        <path d={`M${polar(m, inner * 0.35, at)}L${polar(m, inner - 1, at)}`} stroke={dim ? '#8aa2ba' : '#a9c4dd'} strokeWidth={r > 15 ? 3 : 2.5} />
      </svg>
      <input type="range" aria-label={name} min={-142} max={142} defaultValue={at} />
      {label && <span>{label}</span>}{value && <span>{value}</span>}
    </KnobLabel>
  );
}
const Scale = styled.div<{ $py: number; $dim?: boolean; $right?: boolean; $bright?: boolean }>`
  flex: 1; display: flex; flex-direction: column; justify-content: space-between; padding: ${p => p.$py}px 0; color: ${p => (p.$bright ? '#b4c7d9' : p.$dim ? '#6d86a0' : '#8fa8c1')};
  span { height: 12px; line-height: 12px; display: flex; flex-direction: ${p => (p.$right ? 'row-reverse' : 'row')}; justify-content: flex-end; align-items: center; gap: 5px; }
  span::after { content: ''; width: 5px; height: 1px; background: #a9bfd4; }
`;
const MBars = styled.div<{ $w: number; $m?: string }>`width: ${p => p.$w}px; margin: ${p => p.$m || 0}; background: linear-gradient(90deg, #3b5670 calc(50% - 1px), #2f4a66 calc(50% - 1px), #2f4a66 50%, #3b5670 50%); border: 1px solid #35506b;`;
const Meter = styled(Pane)`display: flex; padding: 4px; gap: 4px;`;
const FxBtn = styled.button<{ $c: string; $bg?: string; $text?: string }>`
  position: relative; width: 100%; border-radius: 2px; background: ${p => p.$bg || '#3c5670'}; color: ${p => p.$text || '#b4c7d9'}; font-size: 10px; padding-top: 3px;
  &::before { content: ''; position: absolute; left: 3px; right: 3px; top: 3px; height: 4px; border: 2px solid ${p => p.$c}; border-bottom: 0; }
`;
const DeviceStrip = ({ name, on = true }: { name: string; on?: boolean }) => (
  <DStrip $on={on}><Moon /><FileTab s={11} /><DName>{name}</DName><Dots s={12} /><KeyArrow /></DStrip>
);
const StepGrid = styled.div`height: 64px; display: grid; grid-template-columns: repeat(4, 1fr); grid-template-rows: repeat(4, 1fr); gap: 1px; border-radius: 2px; overflow: hidden; background: #46617c;`;
const Step = styled.button<{ $on?: boolean }>`background: ${p => (p.$on ? '#a8835f' : 'linear-gradient(#5a7690, #526e89)')}; color: ${p => (p.$on ? '#3a4450' : '#b0c5d9')};`;
const DDiv = styled.div`height: 19px; background: #34506b; border-radius: 2px; display: grid; place-items: center; margin-top: 4px; i { width: 2px; height: 13px; background: #a8805f; }`;
const Num = styled.input<{ $lit?: boolean }>`flex: 1; height: 17px; text-align: right; padding-right: 5px; background: ${p => (p.$lit ? '#334e69' : '#3b5670')}; border-radius: 2px; color: ${p => (p.$lit ? '#a8805f' : '#6b7078')};`;
const NoteBtn = styled.button`width: 15px; height: 16px; background: #a8835f; border-radius: 2px; color: #333f4c; display: grid; place-items: center;`;
const ChTitle = styled.div`height: 20px; line-height: 20px; text-align: center; font-size: 10px; color: #b4c7d9;`;
const ChMeter = styled.i`position: absolute; right: 4px; top: 4px; width: 9px; height: 45px; background: #35506b; border: 1px solid #304b66;`;
const Peak = styled.i<{ $y: number }>`position: absolute; left: 4px; top: ${p => p.$y}px; width: 24px; height: 1px; background: #a8486f;`;

const DelaySide = ({ title, on, src, fb }: { title: string; on: number; src: string; fb: number }) => (
  <Pane $p="0 4px">
    <ChTitle>{title}</ChTitle><ChMeter />
    <Flex $gap={3} $p="4px 11px 7px 0" $j="flex-end"><span>Source</span><SelBox $w={58} $h={21}><DSelect aria-label={`${title} source`}><option>{src}</option></DSelect><Tri s={5} /></SelBox></Flex>
    <Flex $gap={4} $p="0 0 4px"><NoteBtn aria-label="Sync"><svg width="7" height="10" viewBox="0 0 7 10" fill="currentColor"><path d="M3 0h1l3 3-1 .5-2-1V8a2 2 0 1 1-1-1.500z" /></svg></NoteBtn><Num aria-label={`${title} time`} defaultValue="1.00 s" /></Flex>
    <StepGrid>{Array.from({ length: 16 }, (_, i) => <Step key={i} $on={i + 1 === on}>{i + 1}</Step>)}</StepGrid>
    <DDiv><i /></DDiv>
    <Flex $a="flex-end" $j="space-between" $p="2px 0 0"><Knob r={13} at={title === 'LEFT' ? 95 : 70} from={-142} label="Crossfeed" w={50} /><Knob r={17} at={fb} from={-142} c="#7fae68" label="Feedback" w={50} /></Flex>
  </Pane>
);

const GraphSvg = styled.svg`width: 100%; height: 100%;`;
const LowFrame = styled.div`padding-top: 35px; display: flex; justify-content: center;`;
const DevicesView = () => (
  <Chain>
    <ChainRow>
      <ChainColor /><ChainName><span>GATED PAD (LABS)</span></ChainName><Add $w={14} aria-label="Add device"><Plus s={8} /></Add>
      <Device $w={226}>
        <DeviceStrip name="TOOL" />
        <DBody $cols="129px 1fr">
          <Pane $bg="#3d5873">
            <Flex $p="5px" $j="space-between"><DBtn $w={27}>L-</DBtn><DBtn $w={55}>Swap L/R</DBtn><DBtn $w={27}>R-</DBtn></Flex>
            <Flex $j="center" $p="18px 0 0"><Knob r={21} at={105} from={-142} label="Volume" value="+14.7 dB" /><Knob r={21} at={0} from={-3} to={3} label="Gain" value="0.0 dB" /></Flex>
            <Flex $j="center" $p="9px 0 0"><Knob r={21} at={0} from={-3} to={3} label="Pan" value="0.00 %" /><Knob r={21} at={0} from={-3} to={3} label="Width" value="100 %" /></Flex>
          </Pane>
          <Meter $bg="#38536e"><Scale $py={0} $bright>{['', '20', '40', '60', '80'].map(v => <span key={v}>{v}</span>)}</Scale><MBars $w={28} /></Meter>
        </DBody>
      </Device>
      <Add $w={21} aria-label="Add device"><Plus s={9} /></Add>
      <Device $w={338}>
        <DeviceStrip name="GATE" on={false} />
        <DBody $cols="213px 1fr">
          <Col $rows="33px 105px 1fr">
            <Pane $dim $p="5px"><Flex $gap={5} $p="0 0 0 1px"><Route /><SelBox $h={23}><DSelect $dim $pl={20} aria-label="Sidechain input"><option>Device Input</option></DSelect><SelLead><Cross s={7} /></SelLead><Tri s={6} /></SelBox></Flex></Pane>
            <Pane $bg="#3b5670" />
            <Split $cols="109px 1fr">
              <Pane $dim><Flex $j="center" $p="14px 0 0"><Knob r={16} at={-80} dim label="Threshold" w={54} /><Knob r={16} at={145} from={-142} c="#7189a2" dim label="Depth" w={48} /></Flex></Pane>
              <Pane $dim><Flex $j="center" $p="14px 0 0"><Knob r={16} at={-42} from={-142} c="#6a839c" dim label="Attack" w={46} /><Knob r={16} at={-70} from={-142} c="#7189a2" dim label="Release" w={46} /></Flex></Pane>
            </Split>
          </Col>
          <Col $rows="33px 1fr">
            <FxBtn $c="#5f7b96" $bg="#415c76" $text="#7f98b1">Sidechain FX</FxBtn>
            <Meter $dim><Scale $py={0} $dim>{['', '10', '20', '30', '40', '50', '60', '70'].map(v => <span key={v}>{v}</span>)}</Scale><MBars $w={20} /><MBars $w={9} $m="50px 0 0" /><MBars $w={20} /></Meter>
          </Col>
        </DBody>
      </Device>
      <Add $w={21} aria-label="Add device"><Plus s={9} /></Add>
      <Device $w={438}>
        <DeviceStrip name="DYNAMICS" />
        <DBody $cols="289px 1fr">
          <Col $rows="97px 85px 1fr">
            <Split $cols="149px 1fr">
              <Pane $bg="#324d68">
                <GraphSvg viewBox="0 0 149 97" preserveAspectRatio="none" fill="none">
                  <rect x="54" y="3" width="12" height="91" fill="#2d5380" opacity=".8" /><rect x="86" y="3" width="11" height="91" fill="#2d5078" opacity=".8" />
                  <path d="M3 3h143v91H3zM20 3v91M37 3v91M54 3v91M71 3v91M88 3v91M105 3v91M122 3v91M3 17h143M3 39h143M3 61h143M3 83h143" stroke="#3f5b76" strokeWidth="1" />
                  <path d="M88 40L146 4" stroke="#45617c" strokeWidth="1" /><path d="M3 94L78 48Q90 40 103 36L145 29" stroke="#a8876a" strokeWidth="1.300" />
                </GraphSvg>
              </Pane>
              <Pane $bg="#354f69">
                <GraphSvg viewBox="0 0 137 97" preserveAspectRatio="none" fill="none">
                  <path d="M0 48.500H137" stroke="#5f7b95" /><path d="M0 86H54L74 60Q82 49 90 48.500L92 86L96 85L100 87L104 85L108 86L112 86L133 57L135 86H137" stroke="#2f93d2" strokeWidth="1.200" />
                </GraphSvg>
              </Pane>
            </Split>
            <Split $cols="73px 73px 89px 1fr">
              <Pane><Flex $p="3px 0 0"><Knob r={12} at={0} from={-5} to={5} label="Ratio" w={36} /><Knob r={12} at={-75} from={-142} label="Knee" w={36} /></Flex><Flex $p="0 0 0 2px"><Knob r={12} at={0} from={-142} label="Lo Threshold" w={66} /></Flex></Pane>
              <Pane><Flex $p="3px 0 0"><Knob r={12} at={0} label="Ratio" w={36} /><Knob r={12} at={-75} label="Knee" w={36} /></Flex><Flex $p="0 0 0 3px"><Knob r={12} at={95} from={95} to={142} label="Hi Threshold" w={66} /></Flex></Pane>
              <Pane><Flex $j="flex-end" $p="5px 5px 10px"><DBtn $w={40} $h={20}>RMS</DBtn></Flex><Flex $p="0 0 0 3px"><Knob r={16} at={-90} from={-142} label="Attack" w={42} /><Knob r={16} at={2} from={-142} label="Release" w={42} /></Flex></Pane>
              <Pane><LowFrame><Knob r={16} at={22} from={0} label="Output" w={44} /></LowFrame></Pane>
            </Split>
            <Split $cols="1fr 45px">
              <Pane><Flex $gap={5} $p="4px 4px 4px 5px"><Route /><SelBox $w={124} $h={17}><DSelect $pl={20} aria-label="Source track"><option>Instrument Layer ...</option></DSelect><SelLead><Wave s={9} /></SelLead><Tri s={5} /></SelBox><Num $lit aria-label="Sidechain gain" defaultValue="0.0 dB" /></Flex></Pane>
              <FxBtn $c="#3f7ba3" $bg="#3a556f">Sc FX</FxBtn>
            </Split>
          </Col>
          <Meter><Scale $py={4}>{['', '10', '20', '30', '40'].map(v => <span key={v}>{v}</span>)}</Scale><MBars $w={21} /><MBars $w={9} $m="10px 0" /><MBars $w={21} /><Scale $py={4} $right>{['', '10', '20', '30', '40'].map(v => <span key={v}>{v}</span>)}</Scale><Peak $y={101} /><Peak $y={152} /></Meter>
        </DBody>
      </Device>
      <Add $w={21} aria-label="Add device"><Plus s={9} /></Add>
      <Device $w={382}>
        <DeviceStrip name="DELAY-2" />
        <DBody $cols="117px 117px 53px 1fr">
          <DelaySide title="LEFT" on={3} src="Left In" fb={-65} />
          <DelaySide title="RIGHT" on={4} src="Right In" fb={60} />
          <Col $rows="105px 105px">
            <Pane><Flex $col $p="3px 0 0"><Knob r={17} at={-120} from={-142} label="Detune" w={50} /><Knob r={17} at={-55} from={-142} label="Rate" w={50} /></Flex></Pane>
            <Pane><Flex $col $p="3px 0 0"><Knob r={17} at={80} from={-142} name="High cut" w={50} label={<svg width="11" height="14" viewBox="0 0 11 14" fill="none" stroke="currentColor" strokeWidth="1.200"><path d="M0 4h5q5 0 5 6" /></svg>} /><Knob r={17} at={-30} from={-30} to={142} name="Low cut" w={50} label={<svg width="11" height="14" viewBox="0 0 11 14" fill="none" stroke="currentColor" strokeWidth="1.200"><path d="M11 4H6Q1 4 1 10" /></svg>} /></Flex></Pane>
          </Col>
          <Col $rows="33px 1fr">
            <FxBtn $c="#7fae68">FB FX</FxBtn>
            <Pane><Flex $col $p="51px 0 0" $gap={12}><Knob r={17} at={42} from={-142} label="Width" w={50} /><Knob r={21} at={-42} from={-142} label="Mix" w={50} /></Flex></Pane>
          </Col>
        </DBody>
      </Device>
      <Add $w={21} aria-label="Add device"><Plus s={9} /></Add>
      <Device><DeviceStrip name="PANAGEMENT 2" /></Device>
    </ChainRow>
    <ChainFoot><i /></ChainFoot>
  </Chain>
);

/* ---------- browser ---------- */
const Browser = styled.aside`display: flex; flex-direction: column; background: #426a5f; border: solid #555; border-width: 4px 1px; border-radius: 5px; padding: 0 3px; color: #b0d3c5; min-height: 0;`;
const BTitle = styled.h2`height: 20px; line-height: 20px; padding-left: 7px;`;
const BIcons = styled.div`height: 21px; margin-bottom: 3px; display: flex; justify-content: space-between; color: #9fc5b6;`;
const BIcon = styled.button<{ $on?: boolean }>`width: 27px; display: grid; place-items: center; ${p => p.$on && css`background: #37594f; color: #a98a3c;`}`;
const Search = styled.label`height: 21px; flex: none; margin-bottom: 4px; display: grid; grid-template-columns: 15px 1fr auto; align-items: center; padding: 0 11px 0 7px; background: #2c4f46; border-radius: 2px; input { height: 19px; }`;
const BHead = styled.button`height: 20px; flex: none; display: flex; align-items: center; gap: 8px; padding-left: 7px; background: #486e62; border-bottom: 2px solid #3b6055; width: 100%;`;
const LocList = styled.ul`height: 290px; flex: none; background: #25473f; padding: 2px 2px 0;`;
const Loc = styled.li<{ $sel?: boolean; $in?: boolean }>`
  height: 20px; display: flex; align-items: center; gap: 7px; padding: 0 8px 0 ${p => (p.$in ? 19 : 5)}px;
  ${p => p.$sel && css`background: #345f60; outline: 1px solid #3a6b68; outline-offset: -1px;`}
  em { margin-left: auto; font-style: normal; color: #5f8a7e; font-size: 10px; }
`;
const CatWrap = styled.div`flex: 1; min-height: 0; margin-top: 2px; display: grid; grid-template-columns: 1fr 4px; background: #25473f; overflow: hidden;`;
const CatList = styled.ul`padding-top: 3px;`;
const Cat = styled.li`height: 20px; display: flex; align-items: center; gap: 6px; padding: 0 11px 0 6px; > :last-child { margin-left: auto; color: #43694f; }`;
const CatThumb = styled.i`height: 134px; background: #3f675c;`;
const BFoot = styled.p`height: 18px; flex: none; margin-top: 3px; line-height: 20px; padding-left: 7px; background: #2c4f46;`;
const DEV_COLORS: Record<string, string> = { a: '#a9805c', n: '#3aa5b5', c: '#a5c9ba', d: '#38ba87', m: '#38ba87' };
const DevIcon = ({ k }: { k: string }) => (
  <svg width="15" height="15" viewBox="0 0 15 15" fill="none" stroke={DEV_COLORS[k]}>
    <rect x=".7" y=".7" width="13.600" height="13.600" rx="1" strokeWidth="1.300" fill="#1d3b34" />
    {k === 'a' && <path d="M3 3v9M4.500 4.500v6M6 4v6M7.500 5.500v4M9 6.500v2M3 7.500h9" />}
    {k === 'n' && <path d="M3 4.500h4M3 10.500h4M3 7.500h3M8 7.500h4" />}
    {k === 'c' && <path d="M3.500 3.500h3v2h5v6h-8z" fill={DEV_COLORS[k]} />}
    {k === 'd' && <><ellipse cx="7.500" cy="5" rx="4.500" ry="1.800" /><path d="M3 5v4.500c0 3 9 3 9 0V5" /></>}
    {k === 'm' && <path d="M3 1v13M6 1v13M9 1v13M12 1v13M1 4h13M1 7.500h13M1 11h13" />}
  </svg>
);
const CATS: [string, string][] = [['a', 'Amp'], ['n', 'Arpeggiator'], ['a', 'Audio Receiver'], ['a', 'Bit-8'], ['a', 'Blur'], ['c', 'Chain'], ['n', 'Channel Filter'], ['n', 'Channel Map'], ['a', 'Chorus'], ['a', 'Comb'], ['a', 'Compressor'], ['a', 'DC Offset'], ['a', 'De-Esser'], ['a', 'Delay-1'], ['a', 'Delay-2'], ['a', 'Delay-4'], ['n', 'Diatonic Transposer'], ['a', 'Distortion'], ['m', 'Drum Machine'], ['a', 'Dual Pan'], ['a', 'Dynamics'], ['d', 'E-Clap'], ['d', 'E-Cowbell'], ['d', 'E-Hat'], ['d', 'E-Kick']];
const Plug = () => (<svg width="15" height="13" viewBox="0 0 15 13"><rect width="15" height="13" fill="#83b088" /><path d="M1 6.500h3M4 4h4v5H4zM8 5h2M8 8h2" stroke="#3a5f38" fill="#5a6a3a" /><path d="M12.500 1v11" stroke="#3c7a58" strokeWidth="3" strokeDasharray="2 1.500" /></svg>);
const BrowserView = () => (
  <Browser>
    <BTitle>Browser - Devices</BTitle>
    <BIcons>
      <BIcon $on aria-label="Everything"><PanelIcon /></BIcon>
      <BIcon aria-label="Devices"><svg width="16" height="16" viewBox="0 0 16 16" fill="none" stroke="currentColor" strokeWidth="1.200"><circle cx="8" cy="8" r="7" /><path d="M7 5.500v5L4 8zM9 5.500v5L12 8z" fill="currentColor" stroke="none" /></svg></BIcon>
      <BIcon aria-label="Samples"><svg width="13" height="13" viewBox="0 0 13 13" stroke="currentColor" strokeWidth="1.200"><path d="M0 6.500h13M2 5v3M3.700 1v11M5.400 3v7M7 4v5M8.700 5v3M10.400 5.500v2" /></svg></BIcon>
      <BIcon aria-label="Instruments"><Keys s={12} /></BIcon>
      <BIcon aria-label="Media"><svg width="14" height="14" viewBox="0 0 14 14"><circle cx="7" cy="7" r="6.500" fill="currentColor" /><circle cx="7" cy="7" r="2.500" fill="#37594f" /><circle cx="7" cy="7" r="1" fill="currentColor" /></svg></BIcon>
      <BIcon aria-label="Presets"><svg width="14" height="12" viewBox="0 0 14 12"><path d="M0 0h14v12H0z" fill="currentColor" /><path d="M1 2.500h12" stroke="#37594f" /></svg></BIcon>
      <BIcon aria-label="Computer"><svg width="14" height="12" viewBox="0 0 14 12" fill="currentColor"><path d="M0 0h14v9H8v2h3v1H3v-1h3V9H0z" /></svg></BIcon>
    </BIcons>
    <Search><svg width="13" height="10" viewBox="0 0 13 10" fill="none" stroke="currentColor" strokeWidth="1.300"><circle cx="4" cy="4" r="3.200" /><path d="M6 6.500l2 2.500" /><path d="M8.500 5.500h4l-2 2.500z" fill="currentColor" stroke="none" /></svg><input aria-label="Search devices" /><Cross s={8} /></Search>
    <BHead><Lines s={7} />Collection</BHead>
    <BHead><Lines s={7} />Location</BHead>
    <LocList>
      <Loc $sel><svg width="12" height="12" viewBox="0 0 12 12" fill="none" stroke="#7faea3" strokeWidth="1.700"><circle cx="6" cy="6" r="5" /></svg>All Device Locations<em>94</em></Loc>
      <Loc $in><svg width="15" height="15" viewBox="0 0 15 15"><circle cx="7.500" cy="7.500" r="7.300" fill="#9a4c50" /><path d="M3 9.500V7.500M5 8.500v-3M7.500 8v-3M10 8.500v-3M12 9.500v-2" stroke="#cf8f8c" strokeWidth="1.500" /></svg>Bitwig<em>94</em></Loc>
      <Loc $in><Plug />System VST 2 Plug-ins</Loc>
      <Loc $in><Plug />My VST 2 Plug-ins</Loc>
    </LocList>
    <BHead><Lines s={7} />Category</BHead>
    <CatWrap><CatList>{CATS.map(([k, n]) => <Cat key={n}><DevIcon k={k} /><span>{n}</span><Star /></Cat>)}</CatList><CatThumb /></CatWrap>
    <BFoot>Select a file to see its metadata here</BFoot>
  </Browser>
);

/* ---------- footer ---------- */
const Footer = styled.footer`height: 34px; flex: none; display: flex; align-items: center; padding-top: 2px; color: #b9b9b9;`;
const FBtn = styled.button<{ $c?: string; $w?: number }>`height: 24px; ${p => p.$w && css`width: ${p.$w}px;`} display: grid; place-items: center; color: ${p => p.$c || '#cfcfcf'};`;
const FDiv = styled.i`width: 1px; height: 20px; background: #999;`;
const Modes = styled.div`display: flex; gap: 15px; padding: 0 16px;`;
const Views = styled.div`display: flex; padding-left: 5px;`;
const PanelBtns = styled.div`display: flex; padding-right: 6px;`;
const Hints = styled.div`display: flex; gap: 21px; margin: 0 auto 0 19px; span { color: #8c8c8c; display: flex; gap: 7px; align-items: baseline; } b { font-weight: 400; font-size: 10px; color: #d0d0d0; }`;

/* ---------- numbered markers ---------- */
const Marker = styled.div<{ $fs: number }>`
  position: absolute; width: 126px; height: 126px; transform: translate(-50%, -50%); display: grid; place-items: center; border-radius: 50%; background: #d8d8d8; border: 1px solid #9c9c9c;
  color: #000; font-weight: 700; font-size: ${p => p.$fs}px; line-height: 1; padding-bottom: 4px;
`;
const MARKS: [number, number, number, number][] = [[1, 770, 92, 92], [2, 957, 140, 92], [3, 109, 579, 112], [4, 333, 452, 112], [5, 1128, 452, 112], [6, 1903, 579, 112], [7, 1021, 929, 112]];

export default function App() {
  return (
    <Page>
      <Global />
      <Win>
        <TitleBar>
          <Tabs><TabBtn>New 2* <Cross s={8} /></TabBtn><TabBtn $on>Dunno-1e1-post2* <Cross s={8} /></TabBtn><Sq /><TabBtn>New 3* <Cross s={8} /></TabBtn></Tabs>
          <Logo />
          <WinBtns>
            <WinBtn aria-label="Status"><svg width="10" height="10"><circle cx="5" cy="5" r="4.500" fill="#bd8585" /></svg></WinBtn><TDiv />
            <WinBtn aria-label="Restore"><svg width="10" height="10" viewBox="0 0 10 10" fill="currentColor"><path d="M0 3v7h4zM3 0h7v7z" /></svg></WinBtn>
            <WinBtn aria-label="Minimise"><svg width="9" height="9"><path d="M0 7h9v2H0z" fill="currentColor" /></svg></WinBtn>
            <WinBtn aria-label="Maximise"><svg width="9" height="9" viewBox="0 0 9 9" fill="none" stroke="currentColor"><path d="M.5 .5h8v8h-8zM0 2h9" /></svg></WinBtn>
            <WinBtn aria-label="Close"><Cross s={9} /></WinBtn>
          </WinBtns>
        </TitleBar>
        <ToolBar>
          <TBtn $w={41} $corner><Caps>FILE</Caps></TBtn>
          <TBtn $w={201}>Activate Audio Engine</TBtn>
          <Display>
            <CellIcons><svg width="11" height="11" viewBox="0 0 11 11" fill="none" stroke="currentColor"><rect x="1.500" y="1.500" width="8" height="8" /><rect x=".5" y=".5" width="10" height="10" strokeDasharray="1 1" /></svg><Swap s={10} /></CellIcons>
            <Cell><span>142.00</span><span>4/4</span></Cell>
            <Cell><span>53.1.1.00</span><span>1:27.887</span></Cell>
            <CellIcons><svg width="16" height="12" viewBox="0 0 16 12" fill="currentColor"><path d="M5 0v2h2v4H5v2L0 4zM8 2h2v4H8zM11 2h2v6h-2zM14 2h1v4h-1zM9 9h3v2H9z" /></svg><svg width="11" height="11" viewBox="0 0 11 11" fill="currentColor"><path d="M4 0h3l3 11H1zM6 3L3 9h4z" fillRule="evenodd" /></svg></CellIcons>
            <CellRow><Loop /><svg width="14" height="30" viewBox="0 0 14 30" fill="none" stroke="currentColor" strokeWidth="1.500"><path d="M0 2h3l5 5h6M0 28h6l5-5h3" /></svg></CellRow>
          </Display>
          <TBtn $w={41} $corner><Caps>ADD</Caps></TBtn>
          <BtnGroup><TBtn $w={41} $corner><Caps>EDIT</Caps></TBtn><TBtn $w={40} aria-label="Undo" /><TBtn $w={40} aria-label="Redo" /><TBtn $w={39} aria-label="Duplicate" /><TBtn $w={41} aria-label="Delete"><svg width="13" height="13" viewBox="0 0 13 13"><circle cx="6.500" cy="6.500" r="6.500" fill="#d8b9a3" /><path d="M4 3.500l5 6M9 3.500l-5 6" stroke="#7a5c48" strokeWidth="1.600" /></svg></TBtn></BtnGroup>
          <TBtn $w={41} $corner><Caps>CLIP</Caps></TBtn>
        </ToolBar>
        <Body>
          <InspectorView />
          <Center><ArrangerView /><DevicesView /></Center>
          <BrowserView />
        </Body>
        <Footer>
          <FBtn $w={37} $c="#f58220" aria-label="Info"><svg width="6" height="10" viewBox="0 0 6 10" fill="currentColor"><path d="M2 0h2.500v2H2zM.5 3.500h4V8.500H6V10H0V8.500h2V5H.5z" /></svg></FBtn><FDiv />
          <Modes><FBtn $c="#f58220">ARRANGE</FBtn><FBtn>MIX</FBtn><FBtn>EDIT</FBtn></Modes><FDiv />
          <Views>
            <FBtn $w={31} aria-label="Clips"><svg width="12" height="11" viewBox="0 0 12 11" fill="currentColor"><path d="M0 0h4v2H0zM5 3h3v2H5zM0 4.500h2v2H0zM9 1h3v2H9zM9 5h3v2H9zM0 9h6v2H0zM9 9h2v2H9z" /></svg></FBtn>
            <FBtn $w={31} aria-label="Automation"><svg width="12" height="11" viewBox="0 0 12 11" fill="none" stroke="currentColor" strokeWidth="1.800"><circle cx="3" cy="8" r="2" /><circle cx="8.500" cy="3" r="2" /><path d="M4.500 6.500L7 4.500" /></svg></FBtn>
            <FBtn $w={31} $c="#f58220" aria-label="Device panel"><PanelIcon /></FBtn>
            <FBtn $w={31} aria-label="Mixer panel"><svg width="11" height="11" viewBox="0 0 11 11" fill="currentColor"><path d="M0 0h3v11H0zM4 0h3v11H4zM8 0h3v11H8z" /></svg></FBtn>
          </Views>
          <Hints>
            <span><b>DRAG</b> Rectangular selection</span><span><b>MIDDLE-DRAG</b> Zoom &amp; pan</span><span><b>ALT+MIDDLE-DRAG</b> Pan</span><span><b>DOUBLE-CLICK</b> Insert clip</span>
          </Hints>
          <PanelBtns>
            <FBtn $w={31} $c="#f58220" aria-label="Browser"><FileTab s={11} /></FBtn>
            <FBtn $w={31} aria-label="Project"><svg width="9" height="11" viewBox="0 0 9 11" fill="currentColor"><path d="M0 0h5.500L9 3.500V11H0z" /></svg></FBtn>
            <FBtn $w={31} aria-label="Mappings"><Swap s={11} /></FBtn>
            <FBtn $w={31} aria-label="Touch"><svg width="11" height="12" viewBox="0 0 11 12" fill="currentColor"><path d="M3 1q1-2 2 0v4h4l2 2v3l-1.500 2H4L0 7l1-1 2 1.500z" /></svg></FBtn>
          </PanelBtns><FDiv />
          <FBtn $w={37} aria-label="Keyboard"><Keys s={11} /></FBtn>
        </Footer>
      </Win>
      {MARKS.map(([n, x, y, fs]) => <Marker key={n} $fs={fs} style={{ left: `${(x / 2041) * 100}%`, top: `${(y / 1119) * 100}%` }}>{n}</Marker>)}
    </Page>
  );
}
